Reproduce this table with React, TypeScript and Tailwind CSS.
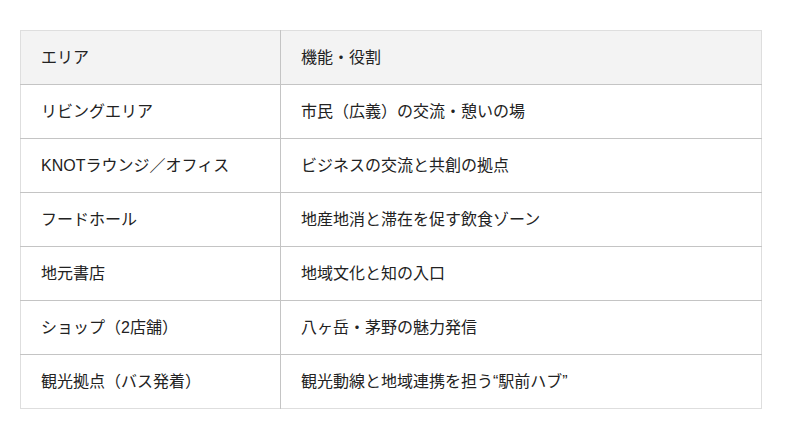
const rows: [string, string][] = [
  ['リビングエリア', '市民（広義）の交流・憩いの場'],
  ['KNOTラウンジ／オフィス', 'ビジネスの交流と共創の拠点'],
  ['フードホール', '地産地消と滞在を促す飲食ゾーン'],
  ['地元書店', '地域文化と知の入口'],
  ['ショップ（2店舗）', '八ヶ岳・茅野の魅力発信'],
  ['観光拠点（バス発着）', '観光動線と地域連携を担う“駅前ハブ”'],
];

export default function App() {
  return (
    <div
      className="w-[800px] h-[439px] bg-white pt-[30px] pl-[20px]"
      style={{ fontFamily: '"Liberation Sans", "Noto Sans CJK JP", sans-serif' }}
    >
      <table className="w-[742px] border-collapse text-[16px] text-[#222] border border-[#dedede]">
        <thead>
          <tr className="bg-[#f3f3f3] h-[54px]">
            <th className="w-[260px] text-left font-normal pl-[20px] border-r border-b border-[#c4c4c4]">エリア</th>
            <th className="text-left font-normal pl-[20px] border-b border-[#c4c4c4]">機能・役割</th>
          </tr>
        </thead>
        <tbody>
          {rows.map(([area, role], i) => (
            <tr key={area} className="h-[54px]">
              <td
                className={
                  i < rows.length - 1
                    ? 'pl-[20px] border-r border-b border-[#c4c4c4]'
                    : 'pl-[20px] border-r border-[#c4c4c4]'
                }
              >
                {area}
              </td>
              <td className={i < rows.length - 1 ? 'pl-[20px] border-b border-[#c4c4c4]' : 'pl-[20px]'}>{role}</td>
            </tr>
          ))}
        </tbody>
      </table>
    </div>
  );
}
